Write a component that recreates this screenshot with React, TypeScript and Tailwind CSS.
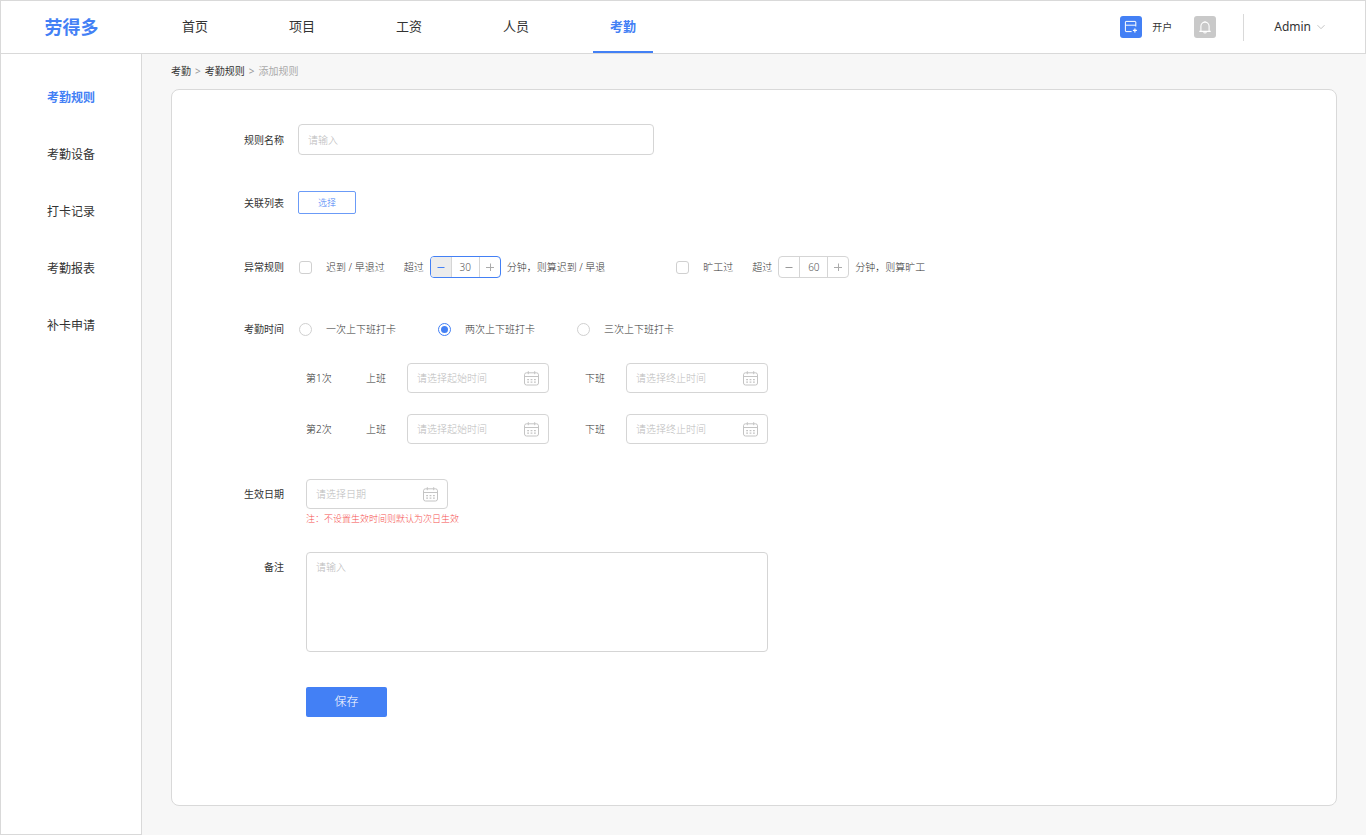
import { useId, useState } from "react";

const NAV = ["首页", "项目", "工资", "人员", "考勤"];
const SIDE = ["考勤规则", "考勤设备", "打卡记录", "考勤报表", "补卡申请"];
const SHIFTS = ["一次上下班打卡", "两次上下班打卡", "三次上下班打卡"];

function CalendarIcon() {
  return (
    <svg viewBox="0 0 15 15" className="size-[15px] shrink-0" fill="none" stroke="#c4c4c4" aria-hidden="true">
      <rect x="0.5" y="1.8" width="14" height="12.2" rx="2" />
      <path d="M0.5 5.5h14M4.3 0.2v3M10.7 0.2v3" />
      <path d="M3.2 8.6h1.8M6.6 8.6h1.8M10 8.6h1.8M3.2 11.2h1.8M6.6 11.2h1.8M10 11.2h1.8" strokeWidth="1.2" />
    </svg>
  );
}

function AccountIcon() {
  return (
    <svg viewBox="0 0 22 22" className="size-[22px]" fill="none" stroke="#fff" strokeWidth="1" aria-hidden="true">
      <path d="M15.8 10.5V6a.6 .6 0 0 0-.6-.6H6a.6 .6 0 0 0-.6 .6v9a.6 .6 0 0 0 .6 .6h5.6M5.5 9.2h10.3" />
      <path d="M14.9 12.4v4M12.9 14.4h4" strokeWidth="1.2" />
    </svg>
  );
}

function BellIcon() {
  return (
    <svg viewBox="0 0 22 22" className="size-[22px]" fill="none" stroke="#fff" strokeWidth="1.1" aria-hidden="true">
      <path d="M5.3 15.4h11.4M6.9 15.2V10.2a4.1 4.1 0 0 1 8.2 0v5M11 6V4.9M9.5 16.4a1.7 1 0 0 0 3 0" />
    </svg>
  );
}

function DateField({ label, placeholder }: { label: string; placeholder: string }) {
  return (
    <label className="flex h-[30px] w-[142px] items-center rounded border border-[#d5d5d5] bg-white px-[9px]">
      <input
        type="text"
        aria-label={label}
        placeholder={placeholder}
        className="min-w-0 flex-1 bg-transparent outline-none placeholder:text-[#bbb]"
      />
      <CalendarIcon />
    </label>
  );
}

function Stepper({ label, initial, active }: { label: string; initial: number; active?: boolean }) {
  const [value, setValue] = useState(initial);
  return (
    <div
      className={`mx-1.5 flex h-[22px] w-[71px] shrink-0 overflow-hidden rounded border bg-white ${
        active ? "border-[#4380f5]" : "border-[#d5d5d5]"
      }`}
    >
      <button
        type="button"
        aria-label={`减少${label}`}
        onClick={() => setValue(value - 1)}
        className={`flex w-[21px] items-center justify-center border-r border-[#d5d5d5] ${
          active ? "bg-[#ececec] text-[#4380f5]" : "text-[#999]"
        }`}
      >
        <svg viewBox="0 0 8 8" className="size-2" stroke="currentColor" aria-hidden="true">
          <path d="M0.5 4.5h7" />
        </svg>
      </button>
      <input
        type="text"
        aria-label={label}
        value={value}
        onChange={(e) => setValue(Number(e.target.value) || 0)}
        className="min-w-0 flex-1 text-center text-[#555] outline-none"
      />
      <button
        type="button"
        aria-label={`增加${label}`}
        onClick={() => setValue(value + 1)}
        className="flex w-[21px] items-center justify-center border-l border-[#d5d5d5] text-[#aaa]"
      >
        <svg viewBox="0 0 8 8" className="size-2" stroke="currentColor" aria-hidden="true">
          <path d="M0 4.5h8M4.5 0.5v8" />
        </svg>
      </button>
    </div>
  );
}

function CheckRule({ name, initial, result, active }: { name: string; initial: number; result: string; active?: boolean }) {
  const id = useId();
  return (
    <div className="flex items-center whitespace-nowrap">
      <input
        id={id}
        type="checkbox"
        className="mr-3.5 size-[13px] shrink-0 appearance-none rounded-[3px] border border-[#d0d0d0] bg-white bg-clip-content p-[2px] checked:bg-[#4380f5]"
      />
      <label htmlFor={id}>{name}</label>
      <span className="ml-[19px]">超过</span>
      <Stepper label={`${name}分钟`} initial={initial} active={active} />
      <span>{result}</span>
    </div>
  );
}

const LABEL = "w-28 shrink-0 text-right font-normal text-[#333]";

export default function App() {
  const [shift, setShift] = useState(1);

  return (
    <div className="flex min-h-screen flex-col bg-[#f7f7f7] font-['Noto_Sans','Noto_Sans_CJK_SC',sans-serif] text-[10px] leading-[14px] text-[#333]">
      <header className="flex h-[54px] items-center border border-[#d9d9d9] bg-white">
        <a href="#" className="w-[141px] shrink-0 text-center text-[18px] leading-6 font-bold text-[#4380f5]">
          劳得多
        </a>
        <nav className="ml-[23px] flex gap-[47px] self-stretch text-[13px]">
          {NAV.map((item) => (
            <a
              key={item}
              href="#"
              className={`flex w-[60px] items-center justify-center border-b-2 ${
                item === "考勤" ? "border-b-[#4380f5] font-bold text-[#4380f5]" : "border-b-transparent"
              }`}
            >
              {item}
            </a>
          ))}
        </nav>
        <div className="mr-10 ml-auto flex items-center">
          <button type="button" className="flex items-center gap-2.5">
            <span className="rounded-[3px] bg-[#4380f5]">
              <AccountIcon />
            </span>
            开户
          </button>
          <button type="button" aria-label="通知" className="ml-[22px] rounded-[3px] bg-[#c9c9c9]">
            <BellIcon />
          </button>
          <span className="mr-[30px] ml-[27px] h-[27px] w-px bg-[#d9d9d9]" />
          <button type="button" className="flex items-center gap-1.5 text-xs">
            Admin
            <svg viewBox="0 0 8 8" className="size-2" fill="none" stroke="#c4c4c4" aria-hidden="true">
              <path d="M0.5 2.2L4 5.7L7.5 2.2" />
            </svg>
          </button>
        </div>
      </header>

      <div className="flex flex-1">
        <aside className="w-[142px] shrink-0 border border-t-0 border-[#d9d9d9] bg-white">
          <nav className="flex flex-col gap-[41px] pt-9 text-center text-xs">
            {SIDE.map((item, i) => (
              <a key={item} href="#" className={i === 0 ? "font-bold text-[#4380f5]" : ""}>
                {item}
              </a>
            ))}
          </nav>
        </aside>

        <main className="flex min-w-0 flex-1 flex-col px-[29px] pt-[10px] pb-[29px]">
          <nav className="flex gap-1">
            <a href="#">考勤</a>
            <span className="text-[#999]">&gt;</span>
            <a href="#">考勤规则</a>
            <span className="text-[#999]">&gt;</span>
            <span className="text-[#aaa]">添加规则</span>
          </nav>

          <form
            className="mt-[11px] flex-1 rounded-lg border border-[#d9d9d9] bg-white pt-[34px] pb-[88px] font-light text-[#333]"
            onSubmit={(e) => e.preventDefault()}
          >
            <div className="flex items-center gap-3.5">
              <label htmlFor="rule-name" className={LABEL}>规则名称</label>
              <input
                id="rule-name"
                type="text"
                placeholder="请输入"
                className="h-[31px] w-full max-w-[356px] rounded border border-[#d5d5d5] px-[9px] outline-none placeholder:text-[#bbb]"
              />
            </div>

            <div className="mt-9 flex items-center gap-3.5">
              <span className={LABEL}>关联列表</span>
              <button type="button" className="h-[23px] w-[58px] rounded-[2px] border border-[#6b9bf7] text-[9px] text-[#4380f5]">
                选择
              </button>
            </div>

            <div className="mt-[42px] flex items-center gap-[15px]">
              <span className={LABEL}>异常规则</span>
              <div className="flex gap-[71px]">
                <CheckRule name="迟到 / 早退过" initial={30} result="分钟，则算迟到 / 早退" active />
                <CheckRule name="旷工过" initial={60} result="分钟，则算旷工" />
              </div>
            </div>

            <div className="mt-11 flex items-center gap-[15px]">
              <span className={LABEL}>考勤时间</span>
              <div className="flex gap-[42px]">
                {SHIFTS.map((item, i) => (
                  <label key={item} className="flex items-center gap-3.5 whitespace-nowrap">
                    <input
                      type="radio"
                      name="shift"
                      checked={shift === i}
                      onChange={() => setShift(i)}
                      className="size-[13px] appearance-none rounded-full border border-[#d0d0d0] bg-white bg-clip-content p-[2px] checked:border-[#4380f5] checked:bg-[#4380f5]"
                    />
                    {item}
                  </label>
                ))}
              </div>
            </div>

            <div className="mt-[27px] flex flex-col gap-[21px] pl-[134px]">
              {["第1次", "第2次"].map((item) => (
                <div key={item} className="flex items-center whitespace-nowrap">
                  <span className="w-[60px]">{item}</span>
                  <span className="w-[41px]">上班</span>
                  <DateField label={`${item}上班`} placeholder="请选择起始时间" />
                  <span className="ml-9 w-[41px]">下班</span>
                  <DateField label={`${item}下班`} placeholder="请选择终止时间" />
                </div>
              ))}
            </div>

            <div className="mt-[35px] flex gap-[22px]">
              <span className={`${LABEL} pt-2`}>生效日期</span>
              <div>
                <DateField label="生效日期" placeholder="请选择日期" />
                <p className="mt-[3px] text-[9px] text-[#f5504e]">注：不设置生效时间则默认为次日生效</p>
              </div>
            </div>

            <div className="mt-[26px] flex gap-[22px]">
              <label htmlFor="remark" className={`${LABEL} pt-2`}>备注</label>
              <textarea
                id="remark"
                placeholder="请输入"
                className="h-[100px] w-full max-w-[462px] resize-none rounded border border-[#d5d5d5] px-[9px] py-[7px] outline-none placeholder:text-[#bbb]"
              />
            </div>

            <button
              type="submit"
              className="mt-[35px] ml-[134px] block h-[30px] w-[81px] rounded-[2px] bg-[#4380f5] text-xs text-white"
            >
              保存
            </button>
          </form>
        </main>
      </div>
    </div>
  );
}
